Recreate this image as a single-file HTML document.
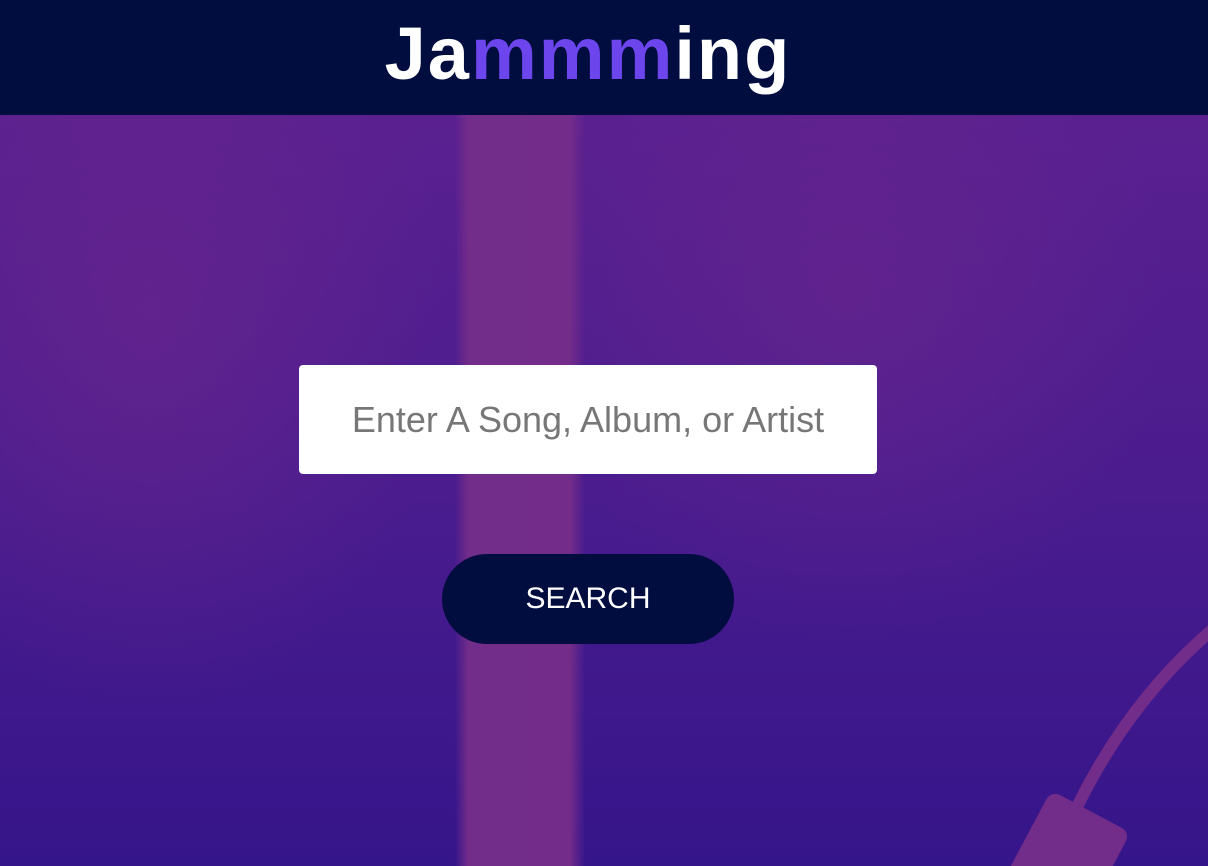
<!DOCTYPE html>
<html><head><meta charset="utf-8"><style>
html,body{margin:0;padding:0;width:1208px;height:866px;overflow:hidden;font-family:"Liberation Sans",sans-serif;background:#38158a}
.hdr{position:absolute;left:0;top:0;width:1208px;height:115px;background:#010c3f;text-align:center}
.logo{position:absolute;left:0;width:1176px;top:14px;text-align:center;font-size:74px;font-weight:bold;color:#fff;line-height:80px;letter-spacing:2px}
.logo span{color:#6c45ec}
.bg{position:absolute;left:0;top:115px;width:1208px;height:751px;
background:
linear-gradient(90deg,rgba(0,0,0,0) 0,rgba(0,0,0,0) 455px,#722c8a 468px,#732c8a 570px,rgba(0,0,0,0) 585px),
radial-gradient(ellipse 300px 400px at 150px 200px,rgba(110,40,140,.55),rgba(0,0,0,0)),
radial-gradient(ellipse 320px 350px at 850px 180px,rgba(110,40,140,.5),rgba(0,0,0,0)),
linear-gradient(180deg,#5a2090 0,#4a1c8e 50%,#35158a 100%);}
svg{position:absolute;left:0;top:0}
.input{position:absolute;left:299px;top:365px;width:578px;height:109px;background:#fff;border-radius:4px;color:#777;font-size:36px;line-height:109px;text-align:center}
.btn{position:absolute;left:442px;top:554px;width:292px;height:90px;border-radius:45px;background:#010c3f;color:#fff;font-size:30px;line-height:90px;text-align:center}
</style></head><body>
<div class="bg"></div>
<svg width="1208" height="866"><path d="M1212 630 Q1130 700 1078 805" stroke="#722c8a" stroke-width="12" fill="none"/>
<rect x="1020" y="805" width="90" height="110" rx="10" fill="#722c8a" transform="rotate(28 1065 860)"/></svg>
<div class="hdr"><div class="logo">Ja<span>mmm</span>ing</div></div>
<div class="input">Enter A Song, Album, or Artist</div>
<div class="btn">SEARCH</div>
</body></html>
